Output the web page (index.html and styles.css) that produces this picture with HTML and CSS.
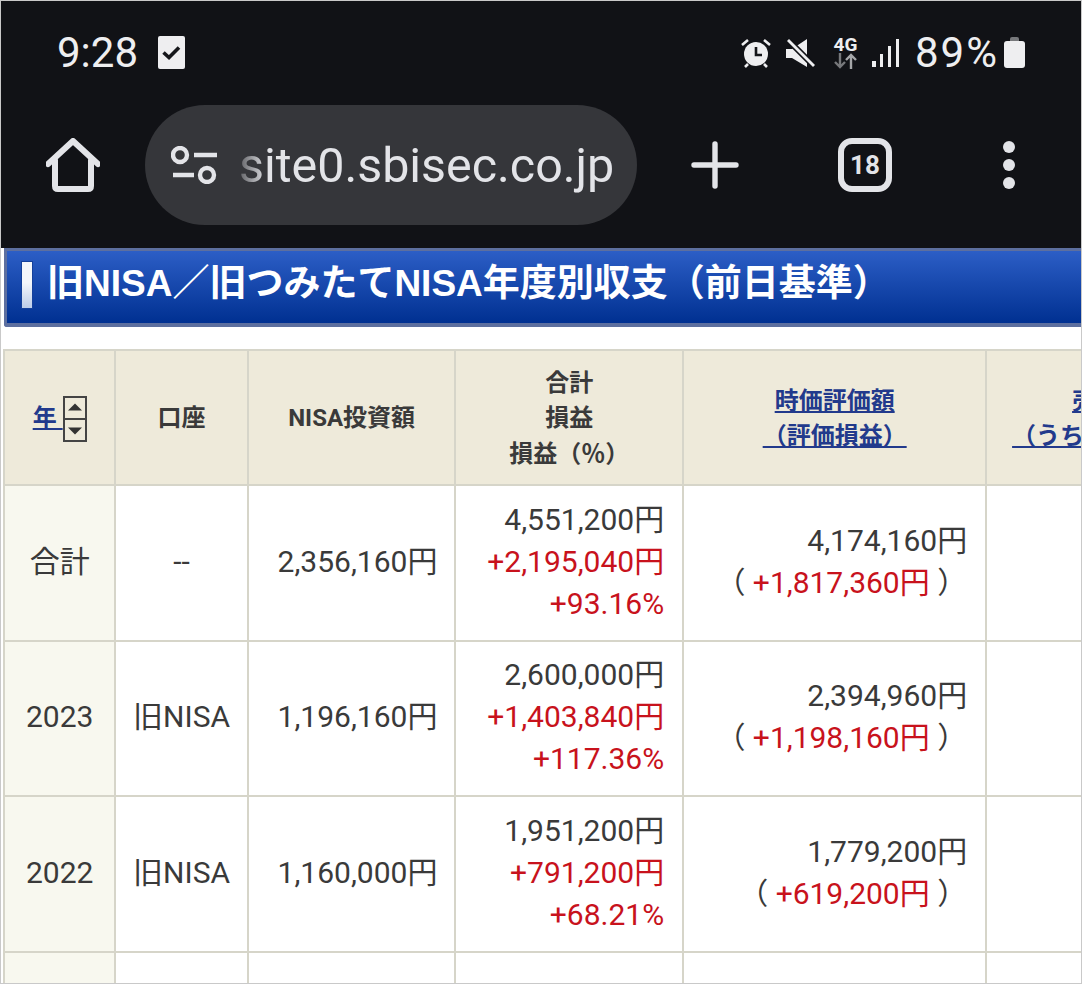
FILE: index.html
```html
<!DOCTYPE html>
<html lang="ja">
<head>
    <meta charset="UTF-8">
    <title>旧NISA年度別収支</title>
    <link rel="stylesheet" href="styles.css">
</head>
<body>
<div class="frame">
    <!-- Phone status bar -->
    <div class="status-bar">
        <span class="time">9:28</span>
        <svg class="check-icon" viewBox="0 0 27 33"><rect x="0" y="0" width="27" height="33" rx="2" fill="#eeeef0"/><path d="M5.5 16.5l5.5 5 10-10" fill="none" stroke="#15161a" stroke-width="3.6"/></svg>
        <div class="status-right">
            <svg class="alarm-icon" viewBox="0 0 30 30"><circle cx="15" cy="16" r="12" fill="#eeeef0"/><path d="M15 9v8h6" fill="none" stroke="#15161a" stroke-width="2.6"/><path d="M1 7l6-5M29 7l-6-5M4 29l3-3M26 29l-3-3" stroke="#eeeef0" stroke-width="2.6"/></svg>
            <svg class="mute-icon" viewBox="0 0 30 30"><path d="M0 11h6L21 1v28L6 20H0z" fill="#eeeef0"/><path d="M1 1l28 28" stroke="#111216" stroke-width="6"/><path d="M2 2l26 26" stroke="#eeeef0" stroke-width="2.8"/></svg>
            <div class="net">
                <span class="net-label">4G</span>
                <svg class="net-arrows" viewBox="0 0 25 16"><path d="M7 0v14M2 9l5 5 5-5" fill="none" stroke="#77787b" stroke-width="2.4"/><path d="M18 16V2M13 7l5-5 5 5" fill="none" stroke="#a5a6a8" stroke-width="2.4"/></svg>
            </div>
            <svg class="signal-icon" viewBox="0 0 28 30"><rect x="0" y="23" width="4" height="6" fill="#eeeef0"/><rect x="8" y="16" width="3" height="13" fill="#eeeef0"/><rect x="16" y="8" width="3" height="21" fill="#eeeef0"/><rect x="24" y="1" width="3" height="28" fill="#eeeef0"/></svg>
            <span class="battery-text">89%</span>
            <svg class="battery-icon" viewBox="0 0 21 31"><path d="M6 2q0-2 2-2h5q2 0 2 2v2H6z" fill="#77787b"/><rect x="0" y="4" width="21" height="27" rx="3" fill="#eeeef0"/></svg>
        </div>
    </div>

    <!-- Browser toolbar -->
    <div class="toolbar">
        <svg class="home-icon" viewBox="0 0 54 54"><path d="M2 26L27 3l25 23M9 22v26q0 3 3 3h30q3 0 3-3V22" fill="none" stroke="#e3e4e8" stroke-width="6" stroke-linecap="round" stroke-linejoin="round"/></svg>
        <div class="url-pill">
            <svg class="tune-icon" viewBox="0 0 46 38"><circle cx="9" cy="9" r="7" fill="none" stroke="#e3e4e8" stroke-width="4.4"/><path d="M23 9h23M2 29h21" stroke="#e3e4e8" stroke-width="4.4"/><circle cx="36" cy="29" r="7" fill="none" stroke="#e3e4e8" stroke-width="4.4"/></svg>
            <span class="url-text">site0.sbisec.co.jp</span>
        </div>
        <svg class="plus-icon" viewBox="0 0 48 48"><path d="M24 3v42M3 24h42" stroke="#e3e4e8" stroke-width="5.4" stroke-linecap="round"/></svg>
        <div class="tab-count">18</div>
        <div class="menu-dots"><i></i><i></i><i></i></div>
    </div>

    <!-- Section heading -->
    <div class="section-head">
        <span class="head-bar"></span>
        <h1>旧NISA／旧つみたてNISA年度別収支（前日基準）</h1>
    </div>

    <table class="nisa-table">
        <colgroup>
            <col class="col-year"><col class="col-account"><col class="col-invest"><col class="col-total"><col class="col-value"><col class="col-sale">
        </colgroup>
        <tr class="head-row">
            <th>
                <div class="year-sort">
                    <a href="#">年&nbsp;</a>
                    <span class="sort-box">
                        <svg viewBox="0 0 20 19"><path d="M10 5l7 7H3z" fill="#333"/></svg>
                        <svg viewBox="0 0 20 19"><path d="M10 14l7-7H3z" fill="#333"/></svg>
                    </span>
                </div>
            </th>
            <th>口座</th>
            <th>NISA投資額</th>
            <th>合計<br>損益<br>損益（％）</th>
            <th><a href="#">時価評価額</a><br><a href="#">（評価損益）</a></th>
            <th><a href="#">売却額</a><br><a href="#">（うち実現損益）</a></th>
        </tr>
        <tr>
            <td class="year">合計</td>
            <td class="center">--</td>
            <td class="num invest">2,356,160円</td>
            <td class="num">4,551,200円<br><span class="plus">+2,195,040円</span><br><span class="plus">+93.16%</span></td>
            <td class="num">4,174,160円<br>（ <span class="plus">+1,817,360円</span> ）</td>
            <td></td>
        </tr>
        <tr>
            <td class="year">2023</td>
            <td class="center">旧NISA</td>
            <td class="num invest">1,196,160円</td>
            <td class="num">2,600,000円<br><span class="plus">+1,403,840円</span><br><span class="plus">+117.36%</span></td>
            <td class="num">2,394,960円<br>（ <span class="plus">+1,198,160円</span> ）</td>
            <td></td>
        </tr>
        <tr>
            <td class="year">2022</td>
            <td class="center">旧NISA</td>
            <td class="num invest">1,160,000円</td>
            <td class="num">1,951,200円<br><span class="plus">+791,200円</span><br><span class="plus">+68.21%</span></td>
            <td class="num">1,779,200円<br>（ <span class="plus">+619,200円</span> ）</td>
            <td></td>
        </tr>
        <tr>
            <td class="year"></td><td></td><td></td><td></td><td></td><td></td>
        </tr>
    </table>
</div>
</body>
</html>
```

FILE: styles.css
```css
html, body {
    margin: 0;
    background: #fff;
}
.frame {
    box-sizing: border-box;
    width: 1082px;
    height: 984px;
    overflow: hidden;
    border: 1px solid #c9c9c9;
    font-family: Roboto, "Noto Sans CJK JP", sans-serif;
}

/* status bar */
.status-bar {
    display: flex;
    align-items: center;
    height: 103px;
    padding: 0 56px 0 56px;
    background: #111216;
    color: #eeeef0;
}
.time {
    font-size: 42px;
    width: 101px;
}
.check-icon {
    width: 27px;
    height: 33px;
}
.status-right {
    display: flex;
    align-items: center;
    margin-left: auto;
}
.alarm-icon { width: 30px; height: 30px; }
.mute-icon { width: 30px; height: 30px; margin-left: 15px; }
.net {
    display: flex;
    flex-direction: column;
    align-items: center;
    width: 25px;
    margin-left: 17px;
}
.net-label {
    font-size: 19px;
    font-weight: 700;
    line-height: 16px;
}
.net-arrows { width: 25px; height: 16px; }
.signal-icon { width: 28px; height: 30px; margin-left: 14px; }
.battery-text {
    font-size: 42px;
    letter-spacing: 2px;
    margin-left: 15px;
}
.battery-icon { width: 21px; height: 31px; margin-left: 5px; }

/* toolbar */
.toolbar {
    display: flex;
    align-items: center;
    height: 144px;
    padding-bottom: 22px;
    box-sizing: border-box;
    background: #111216;
}
.home-icon { width: 54px; height: 54px; margin-left: 45px; }
.url-pill {
    display: flex;
    align-items: center;
    box-sizing: border-box;
    width: 492px;
    height: 120px;
    margin-left: 45px;
    padding-left: 26px;
    border-radius: 60px;
    background: #35363a;
    color: #e3e4e8;
}
.tune-icon { width: 46px; height: 38px; }
.url-text {
    margin-left: 22px;
    font-size: 48.4px;
    -webkit-mask-image: linear-gradient(to right, rgba(0,0,0,.25), #000 28px);
    mask-image: linear-gradient(to right, rgba(0,0,0,.25), #000 28px);
}
.plus-icon { width: 48px; height: 48px; margin-left: 54px; }
.tab-count {
    box-sizing: border-box;
    width: 54px;
    height: 54px;
    margin-left: 99px;
    border: 6px solid #e3e4e8;
    border-radius: 14px;
    color: #e3e4e8;
    font-size: 26px;
    font-weight: 700;
    line-height: 42px;
    text-align: center;
}
.menu-dots {
    display: flex;
    flex-direction: column;
    gap: 6px;
    margin-left: 111px;
}
.menu-dots i {
    display: block;
    width: 12px;
    height: 12px;
    border-radius: 50%;
    background: #e3e4e8;
}

/* blue heading */
.section-head {
    display: flex;
    align-items: center;
    box-sizing: border-box;
    height: 79px;
    margin-left: 3px;
    padding: 0 0 0 14px;
    border: solid #5d6f9f;
    border-width: 3px 0 4px 3px;
    border-bottom-left-radius: 3px;
    background: linear-gradient(#2c5ec6, #003091);
}
.head-bar {
    box-sizing: border-box;
    width: 12px;
    height: 48px;
    margin-bottom: 4px;
    border: 1px solid #14409c;
    background: linear-gradient(#f4f6fb 45%, #bccde9);
}
h1 {
    margin: 0 0 14px 14px;
    color: #fff;
    font-family: "Liberation Sans", "Noto Sans CJK JP", sans-serif;
    font-size: 37px;
    font-weight: 700;
    white-space: nowrap;
}

/* table */
.nisa-table {
    table-layout: fixed;
    width: 1228px;
    margin: 22px 0 0 2px;
    border-collapse: collapse;
    color: #3a3a3a;
    font-size: 30px;
}
.col-year { width: 111px; }
.col-account { width: 132px; }
.col-invest { width: 207px; }
.col-total { width: 227px; }
.col-value { width: 302px; }
.col-sale { width: 243px; }
.nisa-table th,
.nisa-table td {
    padding: 0 18px;
    border: 2px solid #d6d5c9;
}
.nisa-table th {
    height: 130px;
    padding-top: 3px;
    background: #eeeada;
    font-size: 24px;
    font-weight: 700;
    line-height: 35.5px;
    text-align: center;
    white-space: nowrap;
    overflow: hidden;
}
.nisa-table td {
    height: 151.5px;
    padding-bottom: 2px;
    line-height: 42px;
    white-space: nowrap;
}
.nisa-table a {
    color: #223a8c;
}
.nisa-table .year {
    padding: 0 0 2px;
    background: #f8f8ef;
    text-align: center;
}
.nisa-table .center {
    padding: 0 0 2px;
    text-align: center;
}
.nisa-table .num {
    text-align: right;
}
.nisa-table .invest {
    padding-right: 17px;
}
.plus {
    color: #c8121c;
}
.year-sort {
    display: flex;
    align-items: center;
    justify-content: center;
}
.sort-box {
    display: flex;
    flex-direction: column;
    box-sizing: border-box;
    width: 24px;
    height: 46px;
    border: 2px solid #444;
}
.sort-box svg {
    display: block;
    width: 20px;
    height: 20px;
}
.sort-box svg + svg {
    border-top: 2px solid #444;
}
```
